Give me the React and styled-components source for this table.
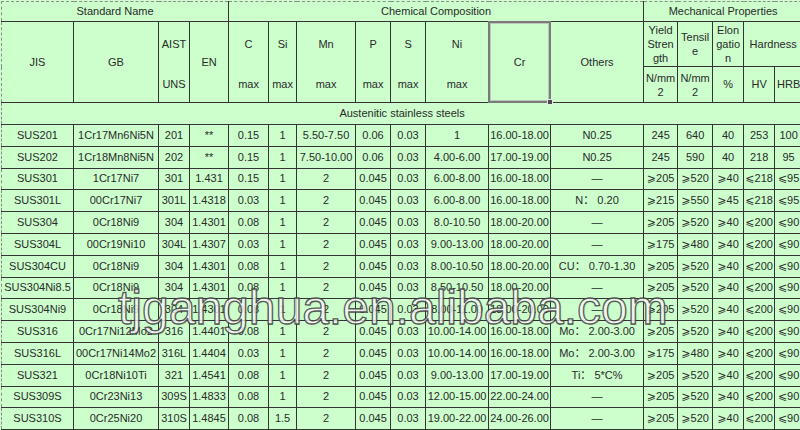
import React from "react";
import styled, { createGlobalStyle, css } from "styled-components";

const Global = createGlobalStyle`
  html, body { margin: 0; padding: 0; background: #ccffcc; overflow: hidden; }
  #root { width: 800px; height: 430px; }
`;

const Page = styled.div`
  position: relative;
  width: 800px;
  height: 430px;
  overflow: hidden;
  box-sizing: border-box;
  padding: 1px 0 0 1px;
  background: #ccffcc;
`;

const Sheet = styled.table`
  border-collapse: collapse;
  table-layout: fixed;
  width: 801px;
  font-family: "Liberation Sans", Arial, "Noto Sans CJK SC", "DejaVu Sans", sans-serif;
  font-size: 11px;
  color: #2a2a2a;
  background: #ccffcc;
`;

const Row = styled.tr`
  height: ${(p) => p.$h}px;
`;

const LINE = "#343434";
const DASH = "1px dashed #8c8c8c";

const Cell = styled.td`
  border: 1px solid ${LINE};
  padding: 0 1px;
  text-align: center;
  vertical-align: middle;
  white-space: nowrap;
  overflow: hidden;
  line-height: 13px;
  ${(p) => p.$edge && css`border-left: ${DASH};`}
  ${(p) => p.$top && css`border-top: ${DASH};`}
  ${(p) => p.$split === "upper" && css`border-bottom: none;`}
  ${(p) => p.$split === "lower" && css`border-top: none;`}
  ${(p) => p.$wrap && css`white-space: normal; line-height: 14px;`}
`;

const SelectedCell = styled(Cell)`
  position: relative;
  overflow: visible;
  &::after {
    content: "";
    position: absolute;
    inset: -1px;
    border: 2px solid #7a7a7a;
    box-shadow: inset 0 0 0 1px #b9c9b9;
    pointer-events: none;
  }
`;

const Handle = styled.span`
  position: absolute;
  right: -3px;
  bottom: -3px;
  width: 4px;
  height: 4px;
  background: #4a4a4a;
  border: 1px solid #e8e8e8;
  z-index: 2;
`;

const Watermark = styled.div`
  position: absolute;
  left: 118px;
  top: 284px;
  font-family: "Liberation Sans", Arial, sans-serif;
  font-size: 48px;
  line-height: 48px;
  white-space: nowrap;
  color: rgba(255, 255, 255, 0.8);
  -webkit-text-stroke: 1.3px rgba(60, 60, 60, 0.85);
  text-shadow: 1px 1px 1px rgba(0, 0, 0, 0.15);
  pointer-events: none;
`;

const widths = [72, 85, 31, 39, 40, 28, 59, 35, 35, 63, 62, 93, 34, 35, 31, 31, 28];

const GE = "⩾";
const LE = "⩽";

const rows = [
  ["SUS201", "1Cr17Mn6Ni5N", "201", "**", "0.15", "1", "5.50-7.50", "0.06", "0.03", "1", "16.00-18.00", "N0.25", "245", "640", "40", "253", "100"],
  ["SUS202", "1Cr18Mn8Ni5N", "202", "**", "0.15", "1", "7.50-10.00", "0.06", "0.03", "4.00-6.00", "17.00-19.00", "N0.25", "245", "590", "40", "218", "95"],
  ["SUS301", "1Cr17Ni7", "301", "1.431", "0.15", "1", "2", "0.045", "0.03", "6.00-8.00", "16.00-18.00", "—", GE + "205", GE + "520", GE + "40", LE + "218", LE + "95"],
  ["SUS301L", "00Cr17Ni7", "301L", "1.4318", "0.03", "1", "2", "0.045", "0.03", "6.00-8.00", "16.00-18.00", "N：  0.20", GE + "215", GE + "550", GE + "45", LE + "218", LE + "95"],
  ["SUS304", "0Cr18Ni9", "304", "1.4301", "0.08", "1", "2", "0.045", "0.03", "8.0-10.50", "18.00-20.00", "—", GE + "205", GE + "520", GE + "40", LE + "200", LE + "90"],
  ["SUS304L", "00Cr19Ni10", "304L", "1.4307", "0.03", "1", "2", "0.045", "0.03", "9.00-13.00", "18.00-20.00", "—", GE + "175", GE + "480", GE + "40", LE + "200", LE + "90"],
  ["SUS304CU", "0Cr18Ni9", "304", "1.4301", "0.08", "1", "2", "0.045", "0.03", "8.00-10.50", "18.00-20.00", "CU：  0.70-1.30", GE + "205", GE + "520", GE + "40", LE + "200", LE + "90"],
  ["SUS304Ni8.5", "0Cr18Ni9", "304", "1.4301", "0.08", "1", "2", "0.045", "0.03", "8.50-10.50", "18.00-20.00", "—", GE + "205", GE + "520", GE + "40", LE + "200", LE + "90"],
  ["SUS304Ni9", "0Cr18Ni9", "304", "1.4301", "0.08", "1", "2", "0.045", "0.03", "8.00-11.00", "18.00-20.00", "—", GE + "205", GE + "520", GE + "40", LE + "200", LE + "90"],
  ["SUS316", "0Cr17Ni12Mo2", "316", "1.4401", "0.08", "1", "2", "0.045", "0.03", "10.00-14.00", "16.00-18.00", "Mo：  2.00-3.00", GE + "205", GE + "520", GE + "40", LE + "200", LE + "90"],
  ["SUS316L", "00Cr17Ni14Mo2", "316L", "1.4404", "0.03", "1", "2", "0.045", "0.03", "10.00-14.00", "16.00-18.00", "Mo：  2.00-3.00", GE + "175", GE + "480", GE + "40", LE + "200", LE + "90"],
  ["SUS321", "0Cr18Ni10Ti", "321", "1.4541", "0.08", "1", "2", "0.045", "0.03", "9.00-13.00", "17.00-19.00", "Ti：  5*C%", GE + "205", GE + "520", GE + "40", LE + "200", LE + "90"],
  ["SUS309S", "0Cr23Ni13", "309S", "1.4833", "0.08", "1", "2", "0.045", "0.03", "12.00-15.00", "22.00-24.00", "—", GE + "205", GE + "520", GE + "40", LE + "200", LE + "90"],
  ["SUS310S", "0Cr25Ni20", "310S", "1.4845", "0.08", "1.5", "2", "0.045", "0.03", "19.00-22.00", "24.00-26.00", "—", GE + "205", GE + "520", GE + "40", LE + "200", LE + "90"],
];

const chemSplit = ["C", "Si", "Mn", "P", "S", "Ni"];

export default function App() {
  return (
    <>
      <Global />
      <Page>
        <Sheet>
          <colgroup>
            {widths.map((w, i) => (
              <col key={i} style={{ width: w }} />
            ))}
          </colgroup>
          <tbody>
            <Row $h={20}>
              <Cell colSpan={4} $edge $top>Standard Name</Cell>
              <Cell colSpan={8} $top>Chemical Composition</Cell>
              <Cell colSpan={5} $top>Mechanical Properties</Cell>
            </Row>
            <Row $h={45}>
              <Cell rowSpan={2} $edge>JIS</Cell>
              <Cell rowSpan={2}>GB</Cell>
              <Cell $split="upper">AIST</Cell>
              <Cell rowSpan={2}>EN</Cell>
              {chemSplit.map((c) => (
                <Cell key={c} $split="upper">{c}</Cell>
              ))}
              <SelectedCell rowSpan={2}>
                Cr
                <Handle />
              </SelectedCell>
              <Cell rowSpan={2}>Others</Cell>
              <Cell $wrap>Yield<br />Stren<br />gth</Cell>
              <Cell $wrap>Tensil<br />e</Cell>
              <Cell $wrap>Elon<br />gatio<br />n</Cell>
              <Cell colSpan={2}>Hardness</Cell>
            </Row>
            <Row $h={36}>
              <Cell $split="lower">UNS</Cell>
              {chemSplit.map((c) => (
                <Cell key={c} $split="lower">max</Cell>
              ))}
              <Cell $wrap>N/mm<br />2</Cell>
              <Cell $wrap>N/mm<br />2</Cell>
              <Cell>%</Cell>
              <Cell>HV</Cell>
              <Cell>HRB</Cell>
            </Row>
            <Row $h={22}>
              <Cell colSpan={17} $edge>Austenitic stainless steels</Cell>
            </Row>
            {rows.map((r) => (
              <Row key={r[0]} $h={21.8}>
                {r.map((v, i) => (
                  <Cell key={i} $edge={i === 0}>{v}</Cell>
                ))}
              </Row>
            ))}
          </tbody>
        </Sheet>
        <Watermark>tjganghua.en.alibaba.com</Watermark>
      </Page>
    </>
  );
}
